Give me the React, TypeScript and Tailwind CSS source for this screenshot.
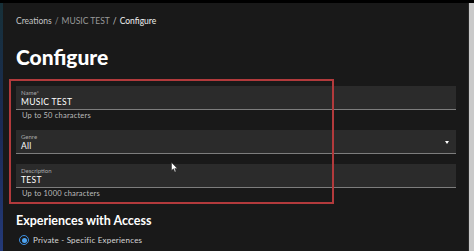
import React from "react";

const font = { fontFamily: "Lato, 'Open Sans', sans-serif" };

function Field({ label, value, arrow }: { label: string; value: string; arrow?: boolean }) {
  return (
    <div className="relative h-[24px] bg-[#2b2b2b] border-b border-[#7d7d7d] pl-[5px] flex flex-col">
      <div className="text-[6px] leading-[6px] text-[#a9a9a9] mt-[4px]">{label}</div>
      <div className="text-[8.5px] leading-[10px] text-white mt-[1px] tracking-[0.3px]">{value}</div>
      {arrow && (
        <div className="absolute right-[7px] top-[11px] w-0 h-0 border-l-[2px] border-r-[2px] border-t-[3px] border-l-transparent border-r-transparent border-t-white" />
      )}
    </div>
  );
}

export default function App() {
  return (
    <div className="relative w-[474px] h-[251px] overflow-hidden bg-[#191919] flex flex-col" style={font}>
      <div className="h-[3px] bg-black shrink-0" />
      <div className="flex flex-1">
        <div className="w-[3px] bg-gradient-to-b from-[#173038] via-[#1b2a55] to-[#243a78] shrink-0" />
        <div className="flex-1 pl-[13px] pr-[12px] flex flex-col">
          <div className="mt-[13px] text-[8.5px] leading-[10px] flex gap-[3px]">
            <span className="text-[#c4c4c4]">Creations</span>
            <span className="text-[#8c8c8c]">/</span>
            <span className="text-[#9a9a9a]">MUSIC TEST</span>
            <span className="text-[#c4c4c4]">/</span>
            <span className="text-[#f0f0f0]">Configure</span>
          </div>
          <div className="mt-[20px] text-[21px] leading-[22px] font-black text-white">Configure</div>
          <div className="mt-[18px]">
            <Field label="Name*" value="MUSIC TEST" />
          </div>
          <div className="text-[7.5px] leading-[9px] text-[#bdbdbd] pl-[6px] mt-[1px] tracking-[0.2px]">Up to 50 characters</div>
          <div className="mt-[10px]">
            <Field label="Genre" value="All" arrow />
          </div>
          <div className="mt-[10px]">
            <Field label="Description" value="TEST" />
          </div>
          <div className="text-[7.5px] leading-[9px] text-[#bdbdbd] pl-[6px] mt-[1px] tracking-[0.2px]">Up to 1000 characters</div>
          <div className="mt-[15px] text-[12.5px] leading-[15px] font-bold text-white">Experiences with Access</div>
          <div className="mt-[7px] flex items-center gap-[4px] pl-[3px]">
            <div className="w-[10px] h-[10px] rounded-full border-[1.5px] border-[#3d8fe0] flex items-center justify-center">
              <div className="w-[5px] h-[5px] rounded-full bg-[#4da3f0]" />
            </div>
            <span className="text-[8px] leading-[10px] text-[#d6d6d6] tracking-[0.2px]">Private - Specific Experiences</span>
          </div>
        </div>
        <div className="w-[6px] flex shrink-0">
          <div className="w-[1px] bg-[#2a2a2a]" />
          <div className="flex-1 bg-[#c9c9c9]" />
        </div>
      </div>
      <div className="absolute left-[9px] top-[79px] w-[325px] h-[125px] border-2 border-[#b23a3c] pointer-events-none" />
      <svg className="absolute left-[171px] top-[162px]" width="7" height="11" viewBox="0 0 7 11">
        <path d="M0.5 0.5 L0.5 8.5 L2.5 6.8 L3.8 10 L5 9.5 L3.8 6.4 L6.3 6.4 Z" fill="white" stroke="#222" strokeWidth="0.5" />
      </svg>
    </div>
  );
}
